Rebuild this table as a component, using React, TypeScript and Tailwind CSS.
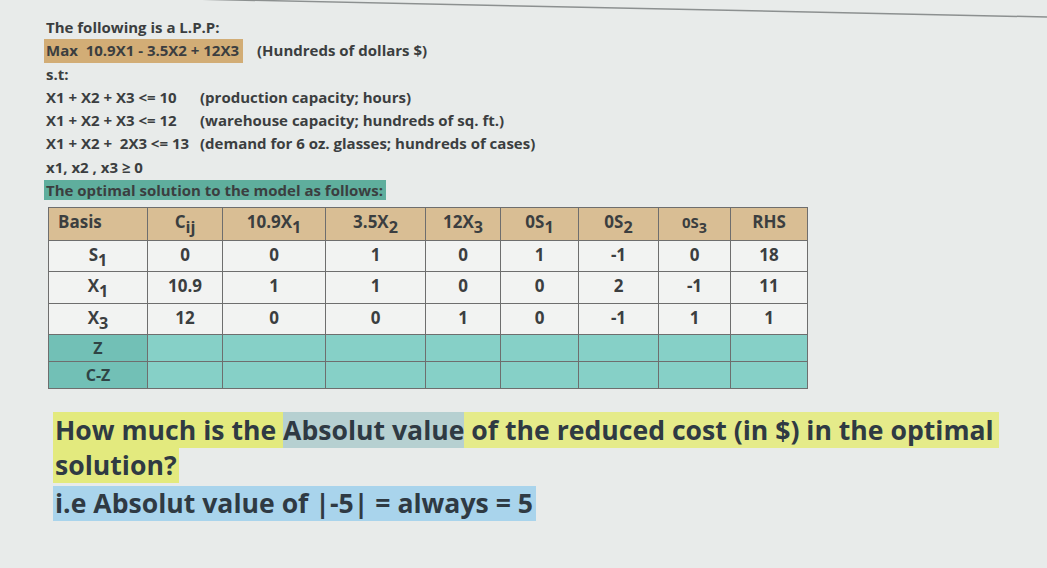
import React from "react";

const cols = [99, 75, 103, 100, 75, 78, 80, 72, 77];

function Sub({ base, sub, small }: { base: string; sub: string; small?: boolean }) {
  return (
    <span className={small ? "text-[15px]" : ""}>
      {base}
      <span className="relative top-[5px] text-[0.95em]">{sub}</span>
    </span>
  );
}

export default function App() {
  const header: React.ReactNode[] = [
    "Basis",
    <Sub base="C" sub="ij" />,
    <Sub base="10.9X" sub="1" />,
    <Sub base="3.5X" sub="2" />,
    <Sub base="12X" sub="3" />,
    <Sub base="0S" sub="1" />,
    <Sub base="0S" sub="2" />,
    <Sub base="0S" sub="3" small />,
    "RHS",
  ];
  const rows: { h: string; cells: React.ReactNode[] }[] = [
    { h: "h-[31px]", cells: [<Sub base="S" sub="1" />, "0", "0", "1", "0", "1", "-1", "0", "18"] },
    { h: "h-[32px]", cells: [<Sub base="X" sub="1" />, "10.9", "1", "1", "0", "0", "2", "-1", "11"] },
    { h: "h-[31px]", cells: [<Sub base="X" sub="3" />, "12", "0", "0", "1", "0", "-1", "1", "1"] },
  ];

  return (
    <div className="relative w-[1047px] h-[568px] overflow-hidden bg-[#e8ebea] text-[#3b3e40] font-['Open_Sans',sans-serif]">
      <svg className="absolute left-0 top-0" width="1047" height="30">
        <line x1="0" y1="-5" x2="1047" y2="17" stroke="#8c9090" strokeWidth="1.5" />
      </svg>

      <div className="pl-[44px] pt-[16px] text-[15px] font-bold leading-[23.3px]">
        <div className="pl-[2px]">The following is a L.P.P:</div>
        <div className="flex">
          <span className="bg-[#d2ad76] pl-[2px] pr-[3px] w-[199px] whitespace-nowrap">Max&nbsp; 10.9X1 - 3.5X2 + 12X3</span>
          <span className="ml-[14px]">(Hundreds of dollars $)</span>
        </div>
        <div className="pl-[2px]">s.t:</div>
        <div className="flex pl-[2px]">
          <span className="w-[154px]">X1 + X2 + X3 &lt;= 10</span>
          <span>(production capacity; hours)</span>
        </div>
        <div className="flex pl-[2px]">
          <span className="w-[154px]">X1 + X2 + X3 &lt;= 12</span>
          <span>(warehouse capacity; hundreds of sq. ft.)</span>
        </div>
        <div className="flex pl-[2px]">
          <span className="w-[154px] whitespace-nowrap">X1 + X2 +&nbsp; 2X3 &lt;= 13</span>
          <span>(demand for 6 oz. glasses; hundreds of cases)</span>
        </div>
        <div className="pl-[2px]">x1, x2 , x3 ≥ 0</div>
        <div>
          <span className="bg-[#5fae9d] pl-[2px] pr-[3px]">The optimal solution to the model as follows:</span>
        </div>
      </div>

      <table className="ml-[48px] mt-[5px] border-collapse text-[17px] font-bold">
        <colgroup>
          {cols.map((w, i) => (
            <col key={i} style={{ width: w }} />
          ))}
        </colgroup>
        <tbody>
          <tr className="h-[33px] bg-[#d9be94]">
            {header.map((c, i) => (
              <td
                key={i}
                className={`border-[1.5px] border-[#6e6e6e] pb-[5px] ${i === 0 ? "text-left pl-[9px]" : "text-center"}`}
              >
                {c}
              </td>
            ))}
          </tr>
          {rows.map((r, ri) => (
            <tr key={ri} className={`${r.h} bg-[#f2f3f2]`}>
              {r.cells.map((c, i) => (
                <td key={i} className="border-[1.5px] border-[#6e6e6e] text-center pb-[4px]">
                  {c}
                </td>
              ))}
            </tr>
          ))}
          {["Z", "C-Z"].map((z) => (
            <tr key={z} className="h-[27px] bg-[#86d0c7]">
              {cols.map((_, i) => (
                <td
                  key={i}
                  className={`border-[1.5px] border-[#6e6e6e] text-center text-[16px] text-[#2f4445] ${i === 0 ? "bg-[#72c0b6]" : ""}`}
                >
                  {i === 0 ? z : ""}
                </td>
              ))}
            </tr>
          ))}
        </tbody>
      </table>

      <div className="pl-[53px] mt-[24px] text-[26.6px] font-bold leading-[35px] text-[#2f3a43]">
        <div className="whitespace-nowrap">
          <span className="bg-[#e3ea7e] pl-[2px]">How much is the </span>
          <span className="bg-[#b6d0d1]">Absolut value</span>
          <span className="bg-[#e5eb8a] pr-[5px]"> of the reduced cost (in $) in the optimal</span>
          <br />
          <span className="bg-[#e3ea7e] pl-[2px] pr-[2px]">solution?</span>
        </div>
        <div className="mt-[3px]">
          <span className="bg-[#a9d4ec] pl-[2px] pr-[3px] inline-block">i.e Absolut value of |-5| = always = 5</span>
        </div>
      </div>
    </div>
  );
}
